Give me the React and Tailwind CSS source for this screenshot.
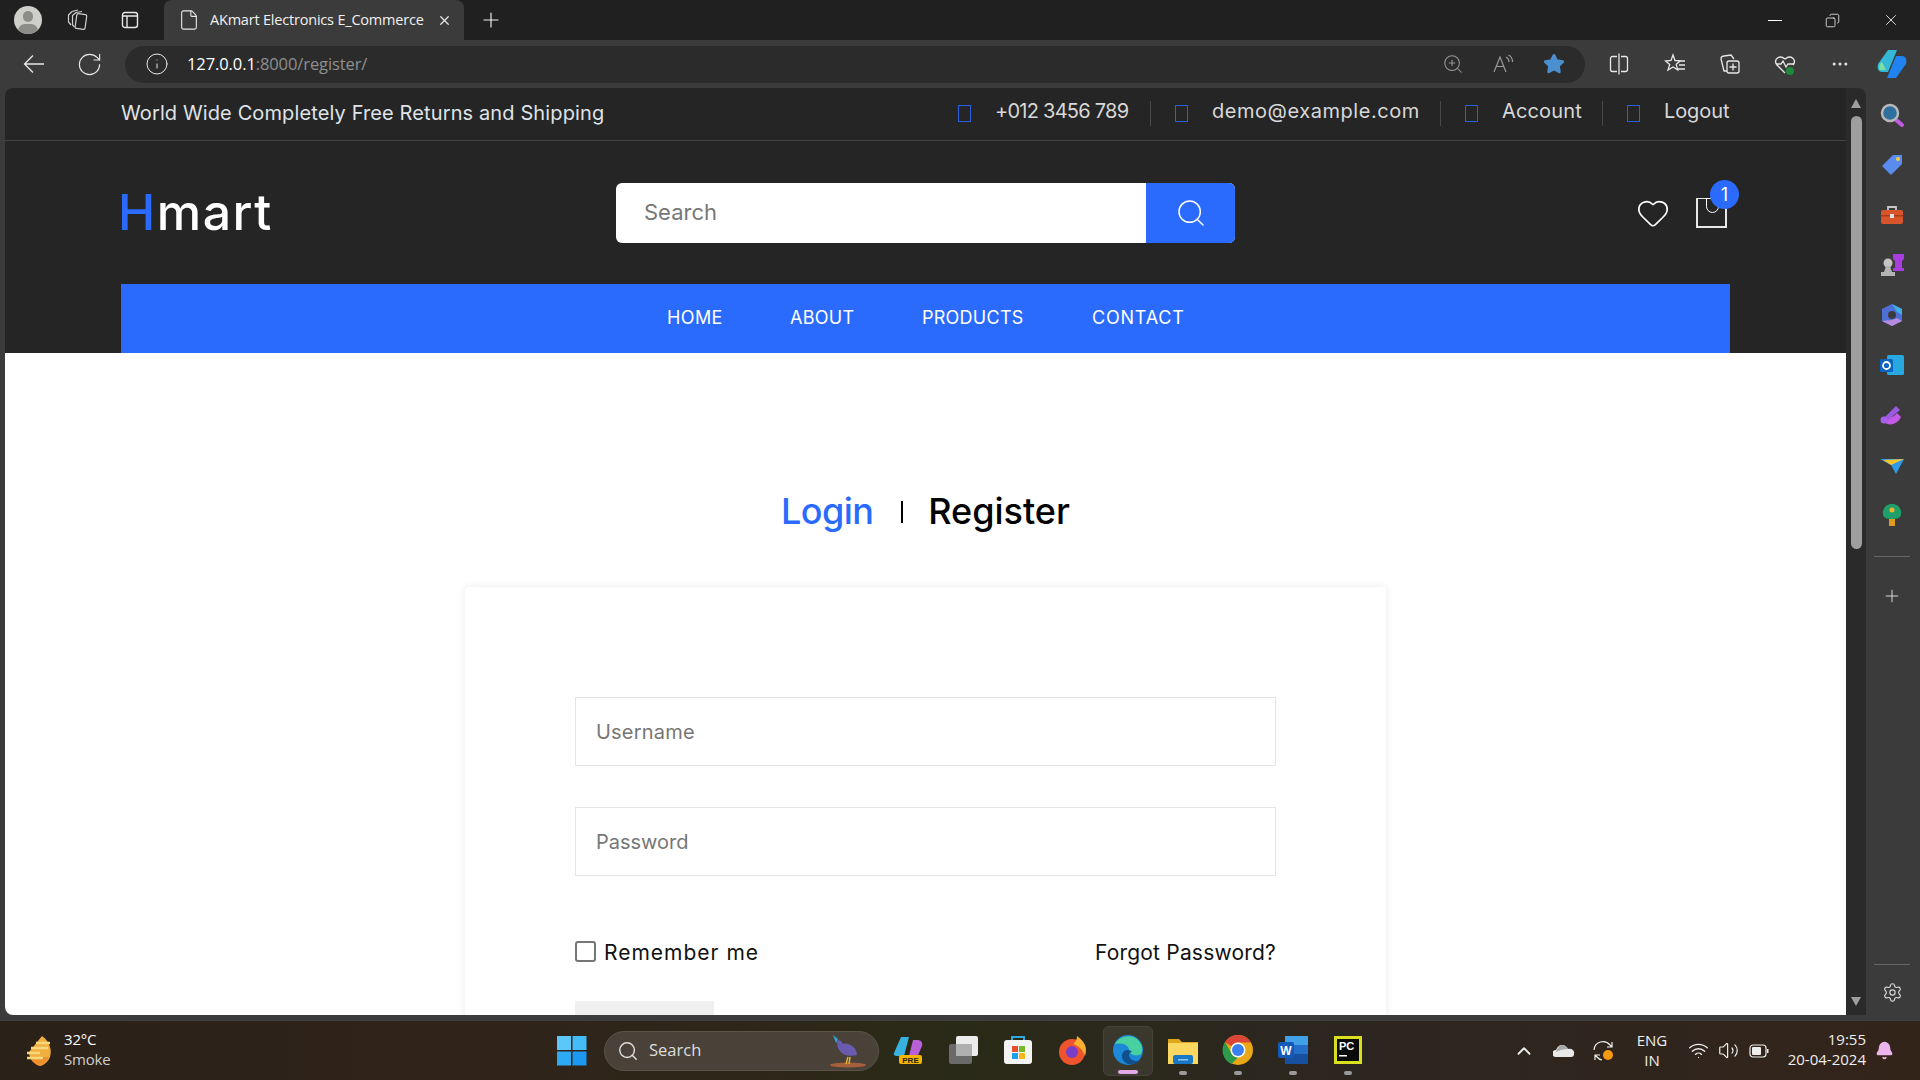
import React from "react";
import {
  RotateCw, Info, ZoomIn, Star, Copy, X, Plus, File, Search, Heart,
  ChevronUp, Wifi, Volume2, Settings, MoreHorizontal, Bell,
} from "lucide-react";

const poppins = { fontFamily: "Inter, 'Noto Sans', sans-serif" };

// missing-glyph box the site shows where its icon font failed
const Tofu = () => <span className="w-[13px] h-[17px] border border-[#2a5fe0] shrink-0" />;

const TopItem = ({ text, width, tracking, last }) => (
  <div className={`flex items-center h-[25px] ${last ? "" : "border-r border-[#4a4a4a] pr-[20px] mr-[24px]"}`}>
    <Tofu />
    <span className={`ml-[24px] mb-[4px] text-[20px] text-[#d8d8d8] whitespace-nowrap ${tracking}`} style={{ width }}>{text}</span>
  </div>
);

const ToolBtn = ({ children, w = 55 }) => (
  <div className="flex items-center justify-center shrink-0" style={{ width: w }}>{children}</div>
);

const SideIcon = ({ children }) => (
  <div className="h-[50px] flex items-center justify-center shrink-0">
    <svg width="26" height="26" viewBox="0 0 26 26">{children}</svg>
  </div>
);

const TaskIcon = ({ children, dot, active }) => (
  <div className={`w-[50px] h-[50px] mx-[2.5px] rounded-md flex flex-col items-center justify-center relative shrink-0 pb-[2px] ${active ? "bg-[#3a382c] border border-[#46443a]" : ""}`}>
    <svg width="32" height="32" viewBox="0 0 32 32">{children}</svg>
    {dot && <span className={`absolute bottom-[1px] h-[4px] rounded-full ${active ? "w-[20px] bg-[#e3a8e8]" : "w-[8px] bg-[#9a9a9a]"}`} />}
  </div>
);

const TabStrip = () => (
  <div className="h-[40px] bg-[#202020] flex items-center shrink-0 text-white">
    <div className="w-[28px] h-[28px] rounded-full bg-[#cfcfca] ml-[14px] relative overflow-hidden shrink-0">
      <span className="absolute left-[9px] top-[5px] w-[10px] h-[11px] rounded-full bg-[#8c8c88]" />
      <span className="absolute left-[4px] top-[18px] w-[20px] h-[14px] rounded-full bg-[#8c8c88]" />
    </div>
    <div className="ml-[23px] w-[24px] flex justify-center">
      <svg width="24" height="24" viewBox="0 0 24 24" fill="none" stroke="#d0d0d0" strokeWidth="1.2">
        <rect x="11" y="6" width="10" height="15" rx="1.500" transform="rotate(8 16 13)" />
        <path d="M9.500 19 7.500 17V7.500L11 4.500M6 17 3.500 14V7L7 3.500" />
        <path d="M11 4.500 17 3.500M7 3.500 13 2" />
      </svg>
    </div>
    <div className="ml-[31px] w-[20px] flex justify-center">
      <svg width="18" height="18" viewBox="0 0 18 18" fill="none" stroke="#e8e8e8" strokeWidth="1.4">
        <rect x="1.500" y="1.500" width="15" height="15" rx="2.500" />
        <path d="M1.500 5h15M6 5v11.500" />
      </svg>
    </div>
    <div className="ml-[24px] w-[300px] h-[40px] bg-[#3b3b3b] rounded-t-lg flex items-center pl-[14px] shrink-0">
      <File size={22} strokeWidth={1.2} className="text-[#e8e8e8]" />
      <span className="ml-[10px] w-[213px] text-[14.5px] whitespace-nowrap text-[#f0f0f0] tracking-[-0.2px]" style={{ fontFamily: "'Open Sans', sans-serif" }}>
        AKmart Electronics E_Commerce
      </span>
      <X size={15} strokeWidth={2} className="ml-[14px] text-[#e8e8e8]" />
    </div>
    <Plus size={24} strokeWidth={1.2} className="ml-[15px] text-[#eee]" />
    <div className="flex-1" />
    <div className="w-[14px] h-px bg-white mr-[43px]" />
    <Copy size={15} strokeWidth={1.2} className="mr-[42px] -scale-x-100" />
    <X size={18} strokeWidth={1.1} className="mr-[20px]" />
  </div>
);

const Toolbar = () => (
  <div className="h-[48px] bg-[#3b3b3b] flex items-center shrink-0 text-[#e8e8e8]">
    <svg width="22" height="22" viewBox="0 0 22 22" fill="none" stroke="#e8e8e8" strokeWidth="1.300" className="ml-[23px] shrink-0">
      <path d="M21 11H1.500M10 2.500 1.500 11l8.500 8.500" />
    </svg>
    <RotateCw size={27} strokeWidth={1} className="ml-[31px] shrink-0" />
    <div className="ml-[22px] w-[1460px] h-[37px] rounded-full bg-[#2b2b2b] flex items-center shrink-0" style={{ fontFamily: "'Open Sans', sans-serif" }}>
      <Info size={24} strokeWidth={1} className="ml-[20px]" />
      <span className="ml-[18px] text-[16.5px] tracking-[-0.1px] text-white">127.0.0.1</span>
      <span className="text-[16.5px] tracking-[-0.1px] text-[#8f8f8f]">:8000/register/</span>
      <div className="flex-1" />
      <ZoomIn size={22} strokeWidth={1.1} className="text-[#9a9a9a]" />
      <svg width="22" height="20" viewBox="0 0 22 20" fill="none" stroke="#9a9a9a" strokeWidth="1.2" className="ml-[28px]">
        <path d="M2 18 8 3l6 15M4.500 12.500h7M14 3c2 1 3 3 3 5M16.500 1c3 1.500 4 4 4 7" />
      </svg>
      <Star size={22} fill="#4a90d0" stroke="#4a90d0" className="ml-[29px] mr-[20px]" />
    </div>
    <ToolBtn w={68}>
      <svg width="20" height="22" viewBox="0 0 20 22" fill="none" stroke="#e8e8e8" strokeWidth="1.300">
        <path d="M8 3.500H3.500a2 2 0 0 0-2 2v11a2 2 0 0 0 2 2H8M12 3.500h4.500a2 2 0 0 1 2 2v11a2 2 0 0 1-2 2H12M10 .5v21" />
      </svg>
    </ToolBtn>
    <ToolBtn w={43}>
      <svg width="22" height="22" viewBox="0 0 22 22" fill="none" stroke="#e8e8e8" strokeWidth="1.3">
        <path d="m9 2 2 5.500 5.500.3-4.300 3.500 1.500 5.500L9 14l-5 3 1.700-5.500L1.500 8 7 7.500zM15 8h6M15 12h6M14 16h7" />
      </svg>
    </ToolBtn>
    <ToolBtn w={67}>
      <svg width="22" height="22" viewBox="0 0 22 22" fill="none" stroke="#e8e8e8" strokeWidth="1.3">
        <path d="M8 18H5l-3-12c0-2 1-3 3-3l7-1 3 4" />
        <rect x="8" y="8" width="12" height="12" rx="2" />
        <path d="M14 10.500v7M10.500 14h7" />
      </svg>
    </ToolBtn>
    <ToolBtn w={43}>
      <svg width="24" height="24" viewBox="0 0 24 24" fill="none">
        <path d="M12 21 4 13c-4-5 2-11 8-6 6-5 12 1 8 6" stroke="#e8e8e8" strokeWidth="1.3" />
        <path d="M3 12h5l2-3 3 6 2-3h6" stroke="#e8e8e8" strokeWidth="1.3" />
        <circle cx="17" cy="19" r="4" fill="#1c8a3a" />
      </svg>
    </ToolBtn>
    <ToolBtn w={67}><MoreHorizontal size={20} strokeWidth={1.6} /></ToolBtn>
    <ToolBtn w={38}>
      <svg width="32" height="32" viewBox="0 0 32 32">
        <path d="M12 2h9l-9 22H6C2 24 1 20 2 16z" fill="#35b8d8" />
        <path d="M20 30h-9l9-22h6c4 0 5 4 4 8z" fill="#1f83f0" />
        <path d="M4 22c-2-3 0-7 2-8l4 8z" fill="#7de0a0" />
      </svg>
    </ToolBtn>
  </div>
);

const TopBar = () => (
  <div className="h-[53px] border-b border-[#444] px-[116px] pb-[2px] flex items-center justify-between shrink-0">
    <span className="text-[20px] text-[#dfe3e8] tracking-[0.12px] whitespace-nowrap">World Wide Completely Free Returns and Shipping</span>
    <div className="flex items-center">
      <TopItem text="+012 3456 789" width={135} tracking="tracking-[-0.75px]" />
      <TopItem text="demo@example.com" width={208} tracking="tracking-[0.55px]" />
      <TopItem text="Account" width={80} tracking="tracking-[0.15px]" />
      <TopItem text="Logout" width={66} tracking="tracking-[-0.1px]" last />
    </div>
  </div>
);

const Header = () => (
  <div className="h-[143px] px-[116px] flex items-center shrink-0">
    <div className="w-[495px] text-[50px] font-medium text-white tracking-[1.5px] leading-none shrink-0 -mt-[2px]">
      <span className="text-[#2a6bfd] -ml-[3px]">H</span>mart
    </div>
    <div className="w-[619px] h-[60px] rounded-md bg-white flex overflow-hidden shrink-0">
      <div className="flex-1 flex items-center pl-[28px] text-[22px] text-[#777]">Search</div>
      <div className="w-[89px] bg-[#2a6bfd] flex items-center justify-center">
        <Search size={32} strokeWidth={1.1} className="text-white" />
      </div>
    </div>
    <div className="flex-1 flex items-center justify-end pr-[3px]">
      <Heart size={34} strokeWidth={1.2} className="text-white mr-[26px]" />
      <div className="w-[31px] h-[30px] border-2 border-[#e8e8e8] border-t-[1px] relative">
        <span className="absolute left-[8px] top-[-1px] w-[13px] h-[15px] border border-white rounded-b-full" />
        <span className="absolute right-[-14px] top-[-19px] w-[29px] h-[29px] rounded-full bg-[#2a6bfd] text-white text-[18px] flex items-center justify-center">1</span>
      </div>
    </div>
  </div>
);

const Nav = () => (
  <div className="mx-[116px] h-[69px] pb-[2px] bg-[#2a6bfd] flex items-center justify-center gap-[69px] text-white text-[18px] shrink-0">
    <span className="w-[54px] whitespace-nowrap tracking-[0.4px]">HOME</span>
    <span className="w-[63px] whitespace-nowrap tracking-[0.3px]">ABOUT</span>
    <span className="w-[101px] whitespace-nowrap tracking-[0.25px]">PRODUCTS</span>
    <span className="w-[92px] whitespace-nowrap tracking-[0.8px]">CONTACT</span>
  </div>
);

const LoginCard = () => (
  <div className="flex-1 min-h-0 bg-white overflow-hidden">
    <div className="pt-[131px] h-[185px] flex items-center justify-center text-[36px] font-medium leading-[54px]">
      <span className="text-[#2a6bfd] tracking-[-0.6px]">Login</span>
      <span className="ml-[28px] mr-[25px] w-[2px] h-[22px] bg-black translate-y-[1px]" />
      <span className="text-black">Register</span>
    </div>
    <div className="w-[921px] mx-auto mt-[49px] pt-[110px] px-[110px] shadow-[0_0_8px_rgba(0,0,0,0.09)] rounded-sm">
      <div className="h-[69px] border border-[#e5e5e5] flex items-center pl-[20px] text-[20px] text-[#777] tracking-[0.2px]">Username</div>
      <div className="h-[69px] mt-[41px] border border-[#e5e5e5] flex items-center pl-[20px] text-[20px] text-[#777]">Password</div>
      <div className="h-[30px] mt-[62px] flex items-center justify-between text-[21px] text-[#111]">
        <div className="flex items-center">
          <span className="w-[21px] h-[21px] rounded-[3px] border-2 border-[#767676] bg-white -mt-[4px]" />
          <span className="ml-[8px] tracking-[1px]">Remember me</span>
        </div>
        <span className="tracking-[0.2px]">Forgot Password?</span>
      </div>
      <div className="w-[139px] h-[60px] mt-[33px] bg-[#f0f0f0]" />
    </div>
  </div>
);

const Scrollbar = () => (
  <div className="w-[20px] bg-[#2a2a2a] rounded-tr-lg flex flex-col items-center shrink-0 pt-[11px] pb-[9px]">
    <span className="w-0 h-0 border-x-[5.5px] border-x-transparent border-b-[9px] border-b-[#9e9e9e]" />
    <span className="w-[11px] h-[433px] mt-[8px] rounded-full bg-[#9e9e9e]" />
    <div className="flex-1" />
    <span className="w-0 h-0 border-x-[5.5px] border-x-transparent border-t-[9px] border-t-[#9e9e9e]" />
  </div>
);

const Sidebar = () => (
  <div className="flex-1 flex flex-col items-center pt-[2px] pb-[2px] pr-[2px] text-[#d8d8d8]">
    <SideIcon>
      <path d="m16 17 7 6" stroke="#c45ae8" strokeWidth="4" strokeLinecap="round" />
      <circle cx="11" cy="11" r="8" fill="#2f6f9e" stroke="#b8b8b8" strokeWidth="2.500" />
    </SideIcon>
    <SideIcon>
      <path d="M3 14 14 3h9v9L12 23z" fill="#5a8cf0" />
      <circle cx="19" cy="7" r="2" fill="#f4d03f" />
    </SideIcon>
    <SideIcon>
      <path d="M9 8V5h8v3" fill="none" stroke="#c8c8c8" strokeWidth="1.800" />
      <rect x="2" y="8" width="22" height="14" rx="2" fill="#d8552c" />
      <rect x="2" y="13" width="22" height="1.500" fill="#a83c1c" />
      <rect x="11" y="12" width="4" height="4" fill="#e0e0e0" />
    </SideIcon>
    <SideIcon>
      <circle cx="9" cy="11" r="4.500" fill="#c4c4c4" />
      <path d="M7 14h4l2 6H5zM2 20h14v4H2z" fill="#b4b4b4" />
      <path d="M14 2h11v5l-2 2v7h2v3H14v-3h2V9l-2-2z" fill="#a83ee0" />
    </SideIcon>
    <SideIcon>
      <path d="M13 2 23 7v12l-10 5L3 19V7z" fill="#4f6fd8" />
      <path d="M13 2 23 7v6l-5-3z" fill="#3fb0e0" />
      <path d="M3 19l10 5 10-5-5-3-5 2z" fill="#b78ae0" />
      <circle cx="13" cy="13" r="4" fill="#3b3b3b" />
    </SideIcon>
    <SideIcon>
      <rect x="8" y="3" width="17" height="20" rx="1.500" fill="#28a8e0" />
      <rect x="1" y="7" width="13" height="13" rx="1.500" fill="#0a64c0" />
      <circle cx="7.500" cy="13.500" r="3.500" fill="none" stroke="#fff" strokeWidth="1.800" />
    </SideIcon>
    <SideIcon>
      <path d="M3 17c3 8 15 7 19-2l-4-4c-2 3-6 5-9 4z" fill="#c45ae8" />
      <path d="m6 15 11-11 4 4L9 18z" fill="#9a5ae0" />
      <circle cx="5" cy="18" r="3.500" fill="#a860e8" />
    </SideIcon>
    <SideIcon>
      <path d="M1 7h24L17 22l-5-9z" fill="#2f9ae8" />
      <path d="M4 8 25 7 12 13z" fill="#f4c430" />
    </SideIcon>
    <SideIcon>
      <path d="M13 2c7 0 10 6 9 11-1 3-4 4-9 4s-8-1-9-4C3 8 6 2 13 2z" fill="#1fa06a" />
      <rect x="10" y="17" width="6" height="7" fill="#e09a20" />
      <circle cx="13" cy="8" r="2.500" fill="#f4b030" />
    </SideIcon>
    <div className="w-[36px] h-px bg-[#666] mt-[16px] shrink-0" />
    <Plus size={20} strokeWidth={1.2} className="mt-[29px]" />
    <div className="flex-1" />
    <div className="w-[36px] h-px bg-[#666] shrink-0" />
    <Settings size={21} strokeWidth={1.3} className="mt-[17px] mb-[10px]" />
  </div>
);

const Taskbar = () => (
  <div className="h-[60px] shrink-0 flex items-center bg-[linear-gradient(90deg,#2a2118_0%,#30231a_25%,#2a2a18_50%,#2c2620_70%,#33241a_100%)] border-t border-[#3f3f3f] text-white" style={{ fontFamily: "'Open Sans', sans-serif" }}>
    <svg width="32" height="32" viewBox="0 0 32 32" className="ml-[24px] shrink-0">
      <path d="M18 1c8 6 10 14 8 21-2 5-6 8-10 9-6-2-11-7-11-14z" fill="#f0b040" />
      <path d="M6 22h19c-2 5-6 8-9 9-4-1-8-4-10-9z" fill="#f0902c" />
      <path d="M12 8h14M7 13h17M3 18h13M3 23h16" stroke="#f6d77a" strokeWidth="2.500" />
    </svg>
    <div className="ml-[8px] w-[61px] text-[15px] leading-[20px] tracking-[-0.2px] -mt-[4px]">
      <div>32°C</div>
      <div className="text-[#cfcfcf]">Smoke</div>
    </div>
    <svg width="30" height="30" viewBox="0 0 30 30" className="ml-[432px] shrink-0">
      <rect x="0" y="0" width="14" height="14" fill="#5cc8fa" />
      <rect x="15.500" y="0" width="14" height="14" fill="#44bcf8" />
      <rect x="0" y="15.500" width="14" height="14" fill="#2eaaf5" />
      <rect x="15.500" y="15.500" width="14" height="14" fill="#1c98f0" />
    </svg>
    <div className="ml-[17px] w-[275px] h-[40px] rounded-full bg-[#4a4238] border border-[#5a5448] flex items-center shrink-0">
      <Search size={22} strokeWidth={1.6} className="ml-[12px] text-[#ddd]" />
      <span className="ml-[10px] text-[16.5px] text-[#ddd]">Search</span>
      <div className="flex-1" />
      <svg width="40" height="36" viewBox="0 0 40 36" className="mr-[12px]">
        <ellipse cx="22" cy="32" rx="18" ry="2.500" fill="#a8603c" />
        <path d="M10 8c3-2 6 0 7 3 6-2 14 4 14 11-8 2-14 0-17-4-3-3-2-6-4-10z" fill="#6a5ab0" />
        <path d="M7 2l5 4-2 4z" fill="#2ea8d8" />
        <path d="M22 24l-2 7M24 24l-1 7" stroke="#e8b030" strokeWidth="1.500" />
      </svg>
    </div>
    <div className="ml-[1.5px] flex items-center">
      <TaskIcon>
        <path d="M2 19 9 3h8l-5 19H5c-2 0-4-1-3-3z" fill="#38b0e0" />
        <path d="M30 12l-6 14h-8l5-20h5c3 0 5 3 4 6z" fill="#b860d8" />
        <rect x="7" y="21" width="23" height="9" rx="2" fill="#f4b400" />
        <text x="18.500" y="28.500" textAnchor="middle" fontSize="8" fontWeight="700" fill="#222" fontFamily="Liberation Sans">PRE</text>
      </TaskIcon>
      <TaskIcon>
        <rect x="2" y="10" width="23" height="20" rx="2" fill="#6a6a6a" />
        <rect x="9" y="2" width="22" height="20" rx="2" fill="#ececec" />
        <rect x="9" y="10" width="16" height="12" fill="#b0b0b0" />
      </TaskIcon>
      <TaskIcon>
        <path d="M10 7V3h12v4" fill="none" stroke="#2ea8e0" strokeWidth="2" />
        <rect x="2" y="6" width="28" height="24" rx="3" fill="#f4f4f4" />
        <rect x="10" y="12" width="6" height="6" fill="#e8502c" />
        <rect x="17" y="12" width="6" height="6" fill="#7ab82c" />
        <rect x="10" y="19" width="6" height="6" fill="#1ea0e8" />
        <rect x="17" y="19" width="6" height="6" fill="#f8b818" />
      </TaskIcon>
      <TaskIcon>
        <circle cx="15" cy="18" r="13" fill="#f0542c" />
        <path d="M20 2c7 5 11 11 8 20-2-6-6-10-12-12 3-2 4-5 4-8z" fill="#fbb030" />
        <circle cx="15" cy="18" r="6" fill="#7a3ec8" />
      </TaskIcon>
      <TaskIcon active dot>
        <circle cx="16" cy="16" r="15" fill="#1c88d8" />
        <path d="M3 10C7 2 20-1 27 7c4 5 4 10 2 13-4 3-11 1-12-3 1-5-6-9-14-7z" fill="#48d0a0" />
        <path d="M16 30c-6-2-8-9-4-13 3-2 7-1 8 1-2 0-4 2-2 6 2 3 7 4 11 2-3 3-8 5-13 4z" fill="#10508c" />
      </TaskIcon>
      <TaskIcon dot>
        <path d="M1 5h11l3 3h16v22H1z" fill="#e0a818" />
        <rect x="1" y="9" width="30" height="21" fill="#fcd860" />
        <rect x="6" y="21" width="20" height="9" rx="2" fill="#1878c8" />
        <rect x="11" y="25" width="10" height="1.500" fill="#8cc8f0" />
      </TaskIcon>
      <TaskIcon dot>
        <circle cx="16" cy="16" r="15" fill="#e8a818" />
        <path d="M16 1a15 15 0 0 1 13 7.500H16a7.500 7.500 0 0 0-6.500 3.800L3 8A15 15 0 0 1 16 1z" fill="#dc4437" />
        <path d="M3 8l6.500 11.300A7.500 7.500 0 0 0 16 23.500L9.500 30A15 15 0 0 1 3 8z" fill="#2c9a48" />
        <circle cx="16" cy="16" r="7.500" fill="#fff" />
        <circle cx="16" cy="16" r="6" fill="#3a80f0" />
      </TaskIcon>
      <TaskIcon dot>
        <rect x="8" y="2" width="23" height="28" rx="2" fill="#2470c8" />
        <rect x="8" y="2" width="23" height="9" fill="#40a0e8" />
        <rect x="8" y="20" width="23" height="10" fill="#1850a0" />
        <rect x="1" y="8" width="16" height="16" rx="2" fill="#1458b8" />
        <text x="9" y="21" textAnchor="middle" fontSize="12" fontWeight="700" fill="#fff" fontFamily="Liberation Sans">W</text>
      </TaskIcon>
      <TaskIcon dot>
        <rect x="2" y="2" width="28" height="28" fill="#d8e020" />
        <rect x="5" y="5" width="22" height="22" fill="#0a0a0a" />
        <text x="7" y="16" fontSize="11" fontWeight="700" fill="#fff" fontFamily="Liberation Sans">PC</text>
        <rect x="7" y="21" width="8" height="1.500" fill="#fff" />
      </TaskIcon>
    </div>
    <div className="flex-1" />
    <ChevronUp size={22} strokeWidth={2} className="mr-[18px] text-[#eee]" />
    <svg width="22" height="14" viewBox="0 0 22 14" className="mr-[18px]">
      <path d="M3 13a3 3 0 0 1 0-7c1-3 3-5 6-5 3 0 5 2 6 4 4-1 7 2 6 5 0 2-1 3-3 3z" fill="#e8e8e8" />
      <path d="M3 8c1-3 3-7 6-7 3 0 5 2 6 4-5 0-8 1-12 3z" fill="#a8a8a8" />
    </svg>
    <svg width="22" height="22" viewBox="0 0 22 22" fill="none" stroke="#eee" strokeWidth="1.200" className="mr-[16px]">
      <path d="M1 10a9 9 0 0 1 16-5l2 2M19 2v5h-5M2 15l2 2a9 9 0 0 0 5 3M2 20v-5h5" />
      <circle cx="15" cy="15" r="5" fill="#f59a10" stroke="none" />
    </svg>
    <div className="w-[42px] text-center text-[15px] leading-[20px] text-[#eee] mr-[15px] -mt-[2px]">
      <div>ENG</div>
      <div>IN</div>
    </div>
    <Wifi size={21} strokeWidth={1.600} className="mr-[9px] text-[#eee]" />
    <Volume2 size={21} strokeWidth={1.400} className="mr-[10px] text-[#eee]" />
    <svg width="20" height="14" viewBox="0 0 20 14" fill="none" className="mr-[13px]">
      <rect x="1" y="1" width="16" height="12" rx="3" stroke="#eee" strokeWidth="1.200" />
      <rect x="3" y="3" width="9" height="8" rx="1" fill="#eee" />
      <rect x="18" y="5" width="1.500" height="4" fill="#eee" />
    </svg>
    <div className="w-[84px] text-right text-[15px] leading-[20px] text-[#eee] -mt-[4px]">
      <div>19:55</div>
      <div className="whitespace-nowrap">20-04-2024</div>
    </div>
    <Bell size={19} fill="#ecb4ec" stroke="#ecb4ec" className="ml-[9px] mr-[26px]" />
  </div>
);

export default function App() {
  return (
    <div className="w-[1920px] h-[1080px] overflow-hidden flex flex-col bg-[#3b3b3b]" style={poppins}>
      <TabStrip />
      <Toolbar />
      <div className="flex-1 min-h-0 flex pl-[5px] pb-[5px]">
        <div className="w-[1841px] h-full flex flex-col bg-[#252525] rounded-tl-lg rounded-bl-lg overflow-hidden shrink-0">
          <TopBar />
          <Header />
          <Nav />
          <LoginCard />
        </div>
        <Scrollbar />
        <Sidebar />
      </div>
      <Taskbar />
    </div>
  );
}
